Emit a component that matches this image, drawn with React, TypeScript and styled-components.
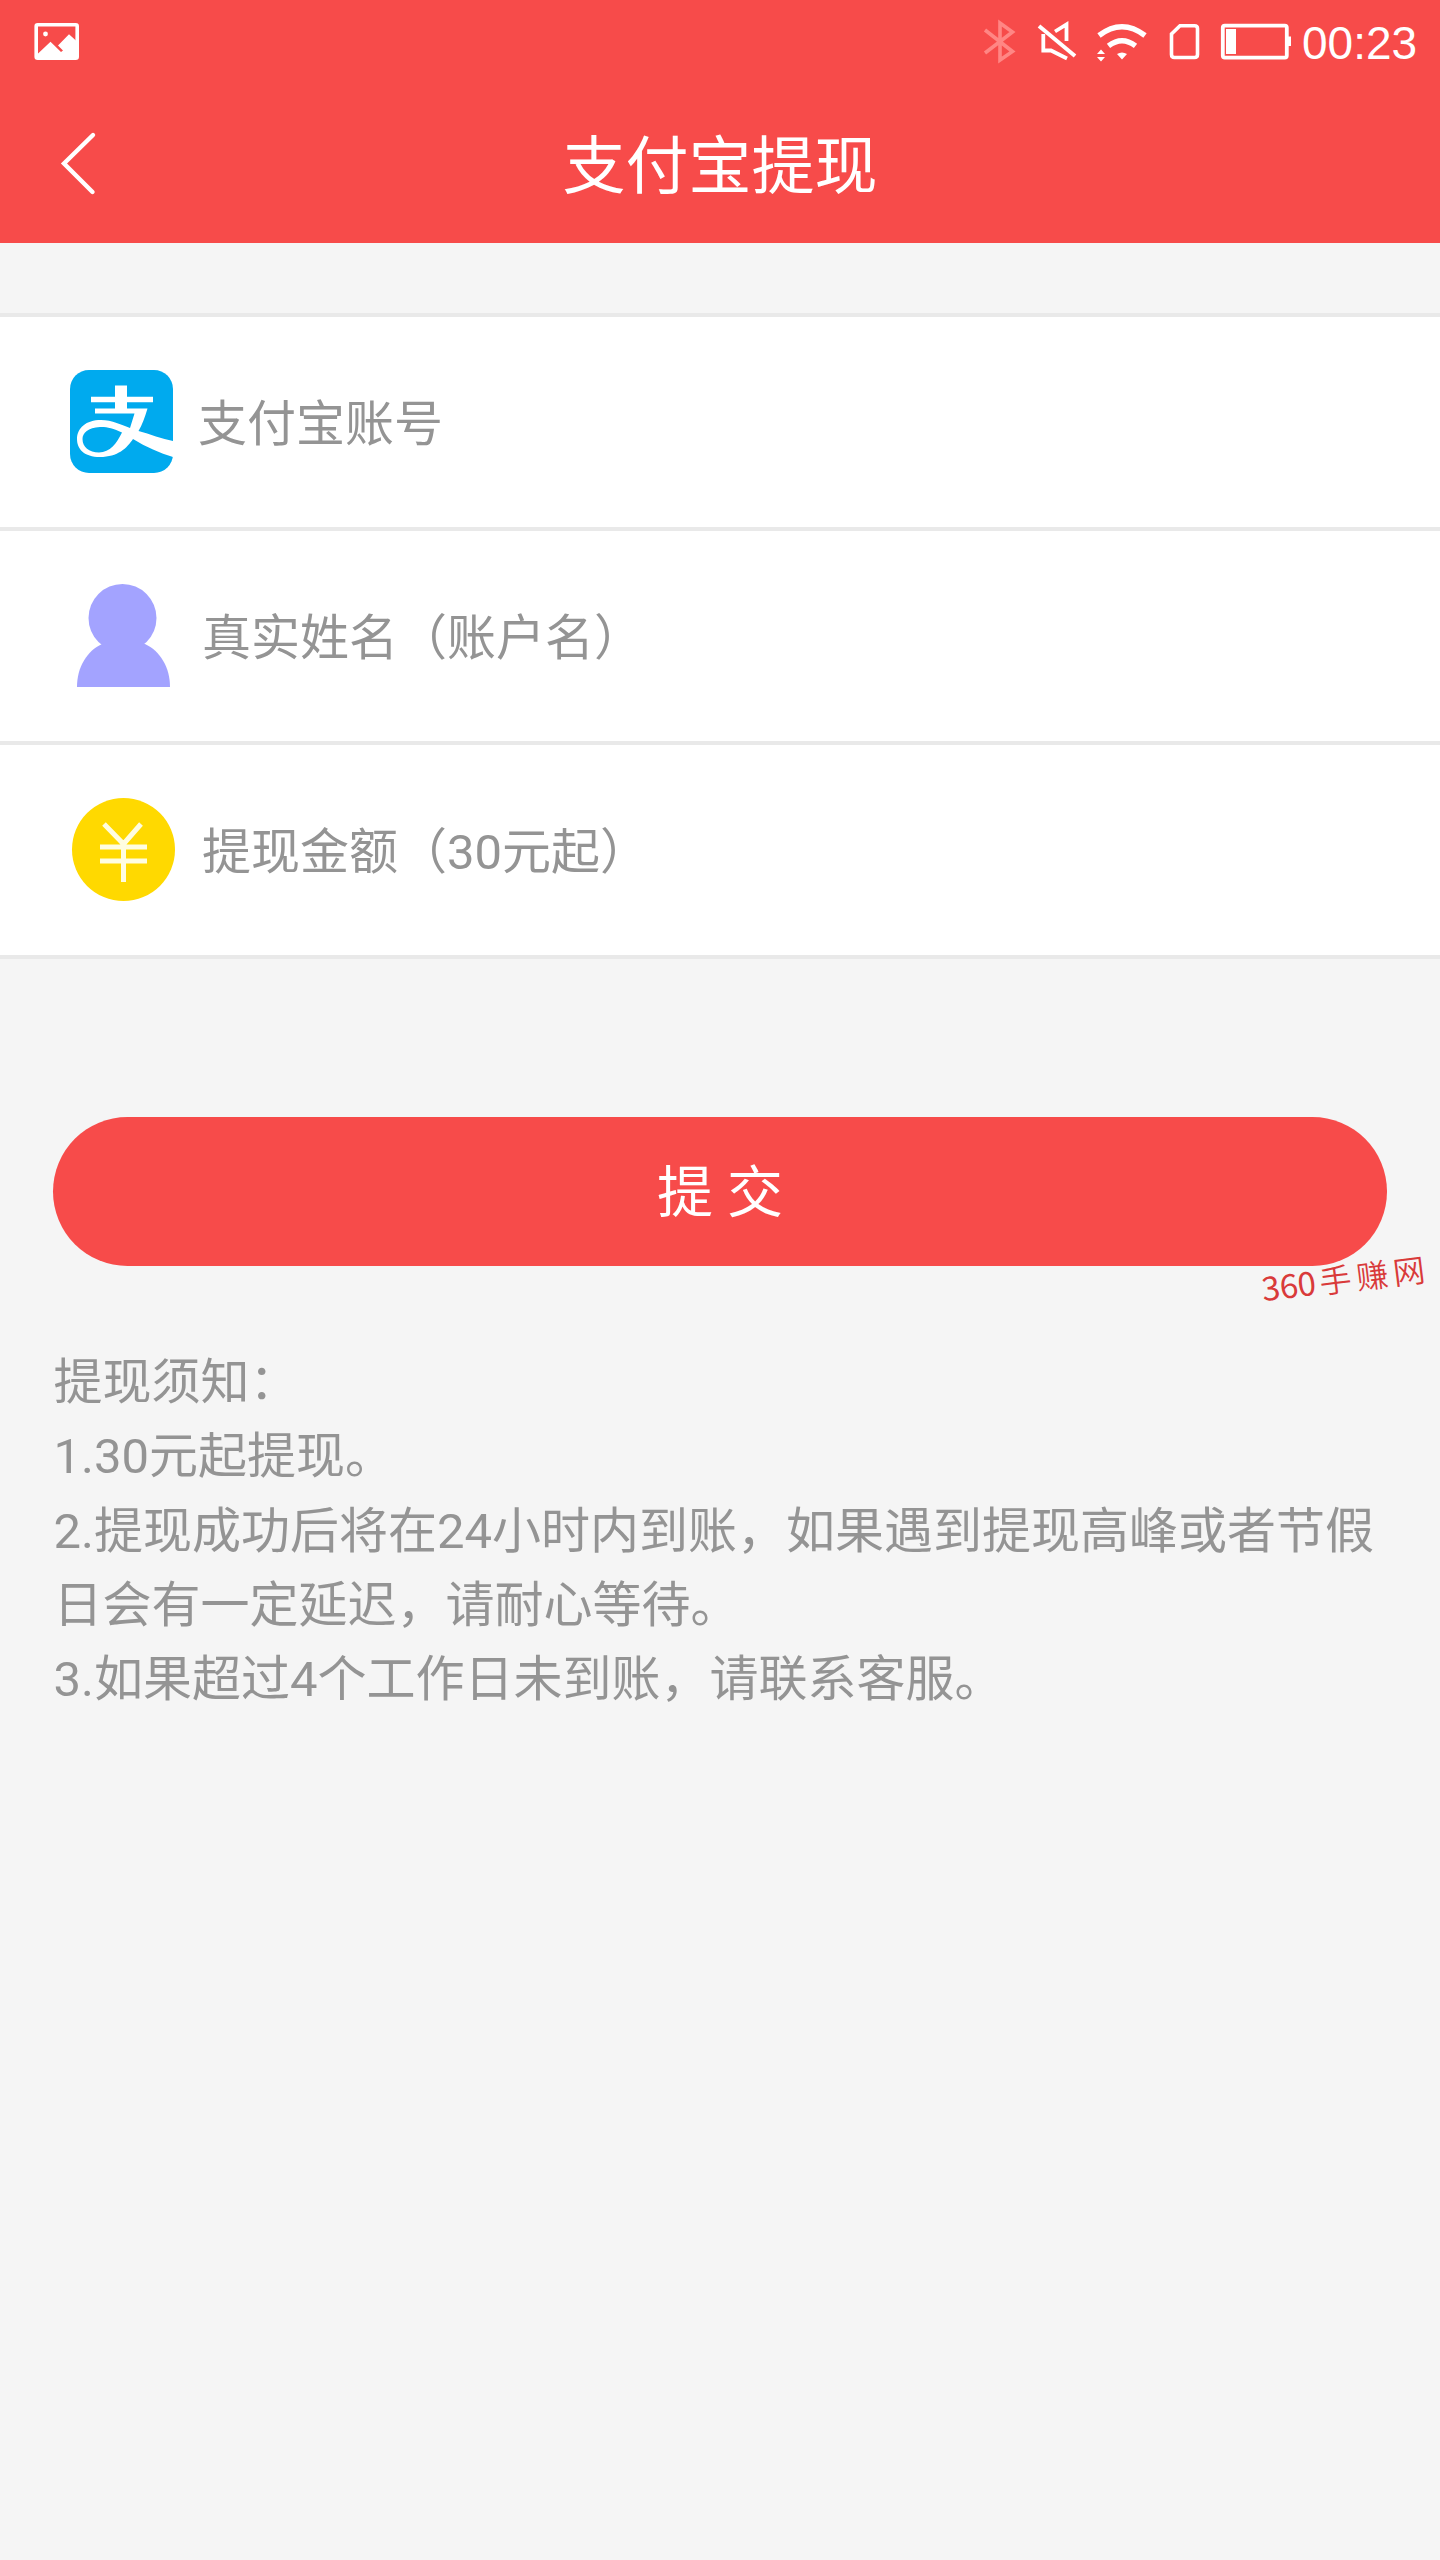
import React from "react";
import styled, { createGlobalStyle } from "styled-components";

const Global = createGlobalStyle`
  body { margin: 0; background: #f5f5f5; }
  * { box-sizing: border-box; }
`;

const Page = styled.div`
  width: 1440px;
  height: 2560px;
  background: #f5f5f5;
  font-family: Roboto, "Noto Sans CJK SC", sans-serif;
  color: #949494;
  overflow: hidden;
`;

const Top = styled.header`
  height: 243px;
  background: #f74b4a;
  color: #fff;
`;

const StatusBar = styled.div`
  height: 84px;
  display: flex;
  justify-content: space-between;
  padding: 0 22px 0 34px;
`;

const StatusGroup = styled.div`
  display: flex;
`;

const Clock = styled.time`
  font-family: "Liberation Sans", sans-serif;
  font-size: 46px;
  line-height: 86px;
  width: 116px;
  margin-left: 1px;
  white-space: nowrap;
`;

const NavBar = styled.div`
  height: 159px;
  display: grid;
  grid-template-columns: 160px 1fr 160px;
`;

const BackButton = styled.button`
  border: 0;
  padding: 0 0 0 56px;
  background: none;
  display: flex;
`;

const Title = styled.h1`
  margin: 0;
  padding-top: 3px;
  font-size: 63px;
  font-weight: 400;
  line-height: 159px;
  text-align: center;
`;

const Form = styled.div`
  margin-top: 70px;
  background: #fff;
  border-top: 4px solid #e9e9e9;
`;

const Field = styled.label`
  height: 214px;
  border-bottom: 4px solid #e9e9e9;
  display: flex;
  align-items: center;
  padding-left: 64px;
`;

const FieldIcon = styled.svg`
  width: 116px;
  height: 116px;
  flex: none;
`;

const Placeholder = styled.span<{ $gap: number }>`
  margin-left: ${(p) => p.$gap}px;
  padding-top: 5px;
  font-size: 49px;
  line-height: 70px;
`;

const SubmitArea = styled.div`
  position: relative;
  padding: 158px 53px 0;
`;

const Submit = styled.button`
  display: block;
  width: 100%;
  height: 149px;
  border: 0;
  border-radius: 75px;
  background: #f74b4a;
  color: #fff;
  font: inherit;
  font-size: 56px;
  line-height: 145px;
  padding: 4px 0 0;
`;

const Watermark = styled.span`
  position: absolute;
  left: 1261px;
  top: 298px;
  display: flex;
  gap: 4px;
  align-items: baseline;
  font-family: "Noto Sans CJK SC", sans-serif;
  font-weight: 350;
  font-size: 32px;
  line-height: 40px;
  letter-spacing: 5px;
  color: #d93a3a;
  transform: rotate(-7deg);
  white-space: nowrap;
`;

const Digits = styled.b`
  font-weight: 400;
  font-size: 33px;
  letter-spacing: -0.3px;
`;

const Notice = styled.section`
  padding: 80px 54px 0 53.5px;
  font-size: 49px;
  line-height: 74.3px;
`;

const Line = styled.p`
  margin: 0;
`;

export default function App() {
  return (
    <Page>
      <Global />
      <Top>
        <StatusBar>
          <svg width="46" height="84" viewBox="34 0 46 84">
            <rect x="36.2" y="24.7" width="41" height="33.5" rx="1.5" fill="none" stroke="#fff" strokeWidth="3.6" />
            <circle cx="45.5" cy="34" r="2.4" fill="#fff" />
            <path d="M37 54.5L50.5 41.8L61 52L63 50.5L58 45.5L69 34.2L77 41.5V58H37Z" fill="#fff" />
          </svg>
          <StatusGroup>
            <svg width="319" height="84" viewBox="982 0 319 84" fill="none" stroke="#fff">
              <path d="M985 30L1012.500 51.500L1000 60V23L1012.500 32L985 53" stroke="#ff8684" strokeWidth="3.6" />
              <path d="M1039 26L1075 56" strokeWidth="4" />
              <path d="M1055 31.500L1066.500 24.500V41M1043.300 34V50.500H1051L1067 58.500" strokeWidth="3.8" />
              <path d="M1099 35.500Q1122 18 1145 35.500M1108.500 45.800Q1122 35.500 1135.500 45.800" strokeWidth="5.4" />
              <path d="M1117 54Q1122 51 1127 54L1122 59.500ZM1097 54L1101 49.500L1105 54ZM1097 57L1101 61.500L1105 57Z" fill="#fff" stroke="none" />
              <path d="M1180 25.700H1194.500Q1197.500 25.700 1197.500 28.500V54.500Q1197.500 57.500 1194.500 57.500H1174.500Q1171.500 57.500 1171.500 54.500V34Z" strokeWidth="3.6" />
              <rect x="1222.800" y="25.600" width="64" height="32" rx="2" strokeWidth="3.8" />
              <path d="M1226 29H1236V54H1226ZM1287 36.500H1291V46H1287Z" fill="#fff" stroke="none" />
            </svg>
            <Clock>00:23</Clock>
          </StatusGroup>
        </StatusBar>
        <NavBar>
          <BackButton aria-label="返回">
            <svg width="44" height="159" viewBox="56 84 44 159" fill="none" stroke="#fff" strokeWidth="4.4" strokeLinecap="round">
              <path d="M93 135L64 163.500L92.500 192" />
            </svg>
          </BackButton>
          <Title>支付宝提现</Title>
        </NavBar>
      </Top>

      <Form>
        <Field>
          <FieldIcon viewBox="64 364 116 116">
            <rect x="70" y="370" width="103" height="103" rx="19" fill="#00aaee" />
            <path d="M115 385.500H127V408.500H147.500C145 417 142 425 138.500 431C150 434 162 439 173 441V457C160 453 146 447 133 439C127 448 118 457 100 457C84 457 77 449 77 439C77 428 86 420 101 420C112 420 122 425 130 428L134.500 413.500H95V408.500H115ZM122 432.500C113 428 105 426.500 100 427C88 427.500 82.500 433 82.500 439C82.500 447 89 452.500 99 452.500C110 452.500 117 443 122 432.500Z" fill="#fff" fillRule="evenodd" />
            <path d="M91 399.500H153" stroke="#fff" strokeWidth="5.4" />
          </FieldIcon>
          <Placeholder $gap={18}>支付宝账号</Placeholder>
        </Field>
        <Field>
          <FieldIcon viewBox="64 578 116 116">
            <circle cx="122.500" cy="618" r="34" fill="#a3a3ff" />
            <path d="M102 644H145C160 651 170 667 170 687H77C77 667 87 651 102 644Z" fill="#a3a3ff" />
          </FieldIcon>
          <Placeholder $gap={22}>真实姓名（账户名）</Placeholder>
        </Field>
        <Field>
          <FieldIcon viewBox="64 792 116 116">
            <circle cx="123.500" cy="849.500" r="51.500" fill="#ffd900" />
            <path d="M104 824L123.500 844L141 824M100 847H147M100 861H147M123.500 844V882" fill="none" stroke="#fffde0" strokeWidth="5" />
          </FieldIcon>
          <Placeholder $gap={22}>提现金额（30元起）</Placeholder>
        </Field>
      </Form>

      <SubmitArea>
        <Submit>提 交</Submit>
        <Watermark><Digits>360</Digits>手赚网</Watermark>
      </SubmitArea>

      <Notice>
        <Line>提现须知：</Line>
        <Line>1.30元起提现。</Line>
        <Line>2.提现成功后将在24小时内到账，如果遇到提现高峰或者节假日会有一定延迟，请耐心等待。</Line>
        <Line>3.如果超过4个工作日未到账，请联系客服。</Line>
      </Notice>
    </Page>
  );
}
